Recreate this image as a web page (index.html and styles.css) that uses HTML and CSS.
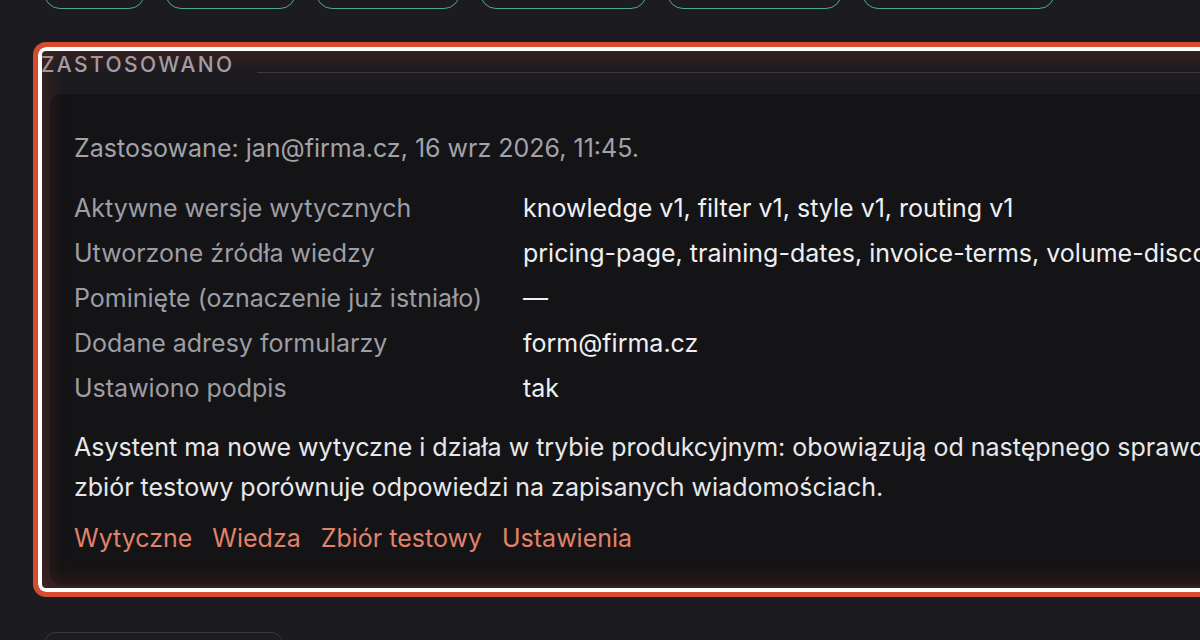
FILE: index.html
```html
<!DOCTYPE html>
<html lang="pl">
<head>
<meta charset="utf-8">
<title>Zastosowano</title>
<link rel="stylesheet" href="styles.css">
</head>
<body>
<div class="page">
  <nav class="chips">
    <span class="chip"></span>
    <span class="chip"></span>
    <span class="chip"></span>
    <span class="chip"></span>
    <span class="chip"></span>
    <span class="chip"></span>
  </nav>

  <section class="applied">
    <div class="applied-head">
      <h2 class="applied-title">Zastosowano</h2>
      <span class="applied-rule"></span>
    </div>
    <div class="card">
      <p class="meta">Zastosowane: jan@firma.cz, 16 wrz 2026, 11:45.</p>
      <dl class="facts">
        <dt>Aktywne wersje wytycznych</dt>
        <dd>knowledge v1, filter v1, style v1, routing v1</dd>
        <dt>Utworzone źródła wiedzy</dt>
        <dd>pricing-page, training-dates, invoice-terms, volume-discounts</dd>
        <dt>Pominięte (oznaczenie już istniało)</dt>
        <dd>—</dd>
        <dt>Dodane adresy formularzy</dt>
        <dd>form@firma.cz</dd>
        <dt>Ustawiono podpis</dt>
        <dd>tak</dd>
      </dl>
      <p class="note">Asystent ma nowe wytyczne i działa w trybie produkcyjnym: obowiązują od następnego sprawozdania, a zbiór testowy porównuje odpowiedzi na zapisanych wiadomościach.</p>
      <div class="links">
        <a href="#">Wytyczne</a>
        <a href="#">Wiedza</a>
        <a href="#">Zbiór testowy</a>
        <a href="#">Ustawienia</a>
      </div>
    </div>
  </section>

  <div class="next-card"></div>
</div>
</body>
</html>
```

FILE: styles.css
```css
html, body {
  margin: 0;
  padding: 0;
  background: #1c1c20;
  overflow: hidden;
}

body {
  font-family: "Inter", "Noto Sans", sans-serif;
  color: #ececef;
}

.page {
  padding-left: 41px;
}

/* top pills (only their lower edge is visible) */
.chips {
  display: flex;
  gap: 20px;
  margin-top: -31px;
  margin-left: 3px;
}

.chip {
  display: block;
  height: 40px;
  box-sizing: border-box;
  border: 1.5px solid #4dab83;
  border-radius: 16px;
}

.chip:nth-child(1) { width: 101px; }
.chip:nth-child(2) { width: 131px; }
.chip:nth-child(3) { width: 144px; }
.chip:nth-child(4) { width: 167px; }
.chip:nth-child(5) { width: 175px; }
.chip:nth-child(6) { width: 193px; }

/* highlighted section */
.applied {
  position: relative;
  width: 1334px;
  margin-top: 42px;
  padding-bottom: 3px;
}

.applied::after {
  content: "";
  position: absolute;
  top: -9px;
  left: -8px;
  right: -9px;
  bottom: -9px;
  border: 5px solid #d94b2f;
  border-radius: 13px;
  box-shadow: inset 0 0 0 4px #ffffff, inset 0 0 22px 6px rgba(190, 60, 40, 0.30);
  pointer-events: none;
}

.applied-head {
  display: flex;
  align-items: center;
  gap: 22px;
}

.applied-title {
  margin: 0;
  font-size: 21px;
  line-height: 28px;
  font-weight: 500;
  letter-spacing: 2.4px;
  text-transform: uppercase;
  color: #a2a2aa;
}

.applied-rule {
  flex: 1;
  height: 1px;
  margin-top: 14px;
  background: #3b3b41;
}

.card {
  margin: 15px 0 0 9px;
  width: 1311px;
  box-sizing: border-box;
  padding: 36px 26px 29px 24px;
  background: #141416;
  border-radius: 12px;
}

.meta {
  margin: 0 0 20px;
  font-size: 25px;
  line-height: 36px;
  color: #a2a2aa;
}

.facts {
  display: grid;
  grid-template-columns: 449px 1fr;
  margin: 0;
  font-size: 25px;
  line-height: 45px;
}

.facts dt {
  color: #9d9da5;
  white-space: nowrap;
}

.facts dd {
  margin: 0;
  color: #efeff1;
  white-space: nowrap;
}

.note {
  margin: 16px 0 0;
  font-size: 25px;
  line-height: 40px;
  color: #e8e8eb;
}

.links {
  display: flex;
  gap: 20px;
  margin-top: 13px;
  font-size: 25px;
  line-height: 36px;
}

.links a {
  color: #e1826a;
  text-decoration: none;
}

.next-card {
  margin: 44px 0 0 3px;
  width: 239px;
  height: 60px;
  box-sizing: border-box;
  border: 1px solid #38383e;
  border-radius: 12px;
}
```
